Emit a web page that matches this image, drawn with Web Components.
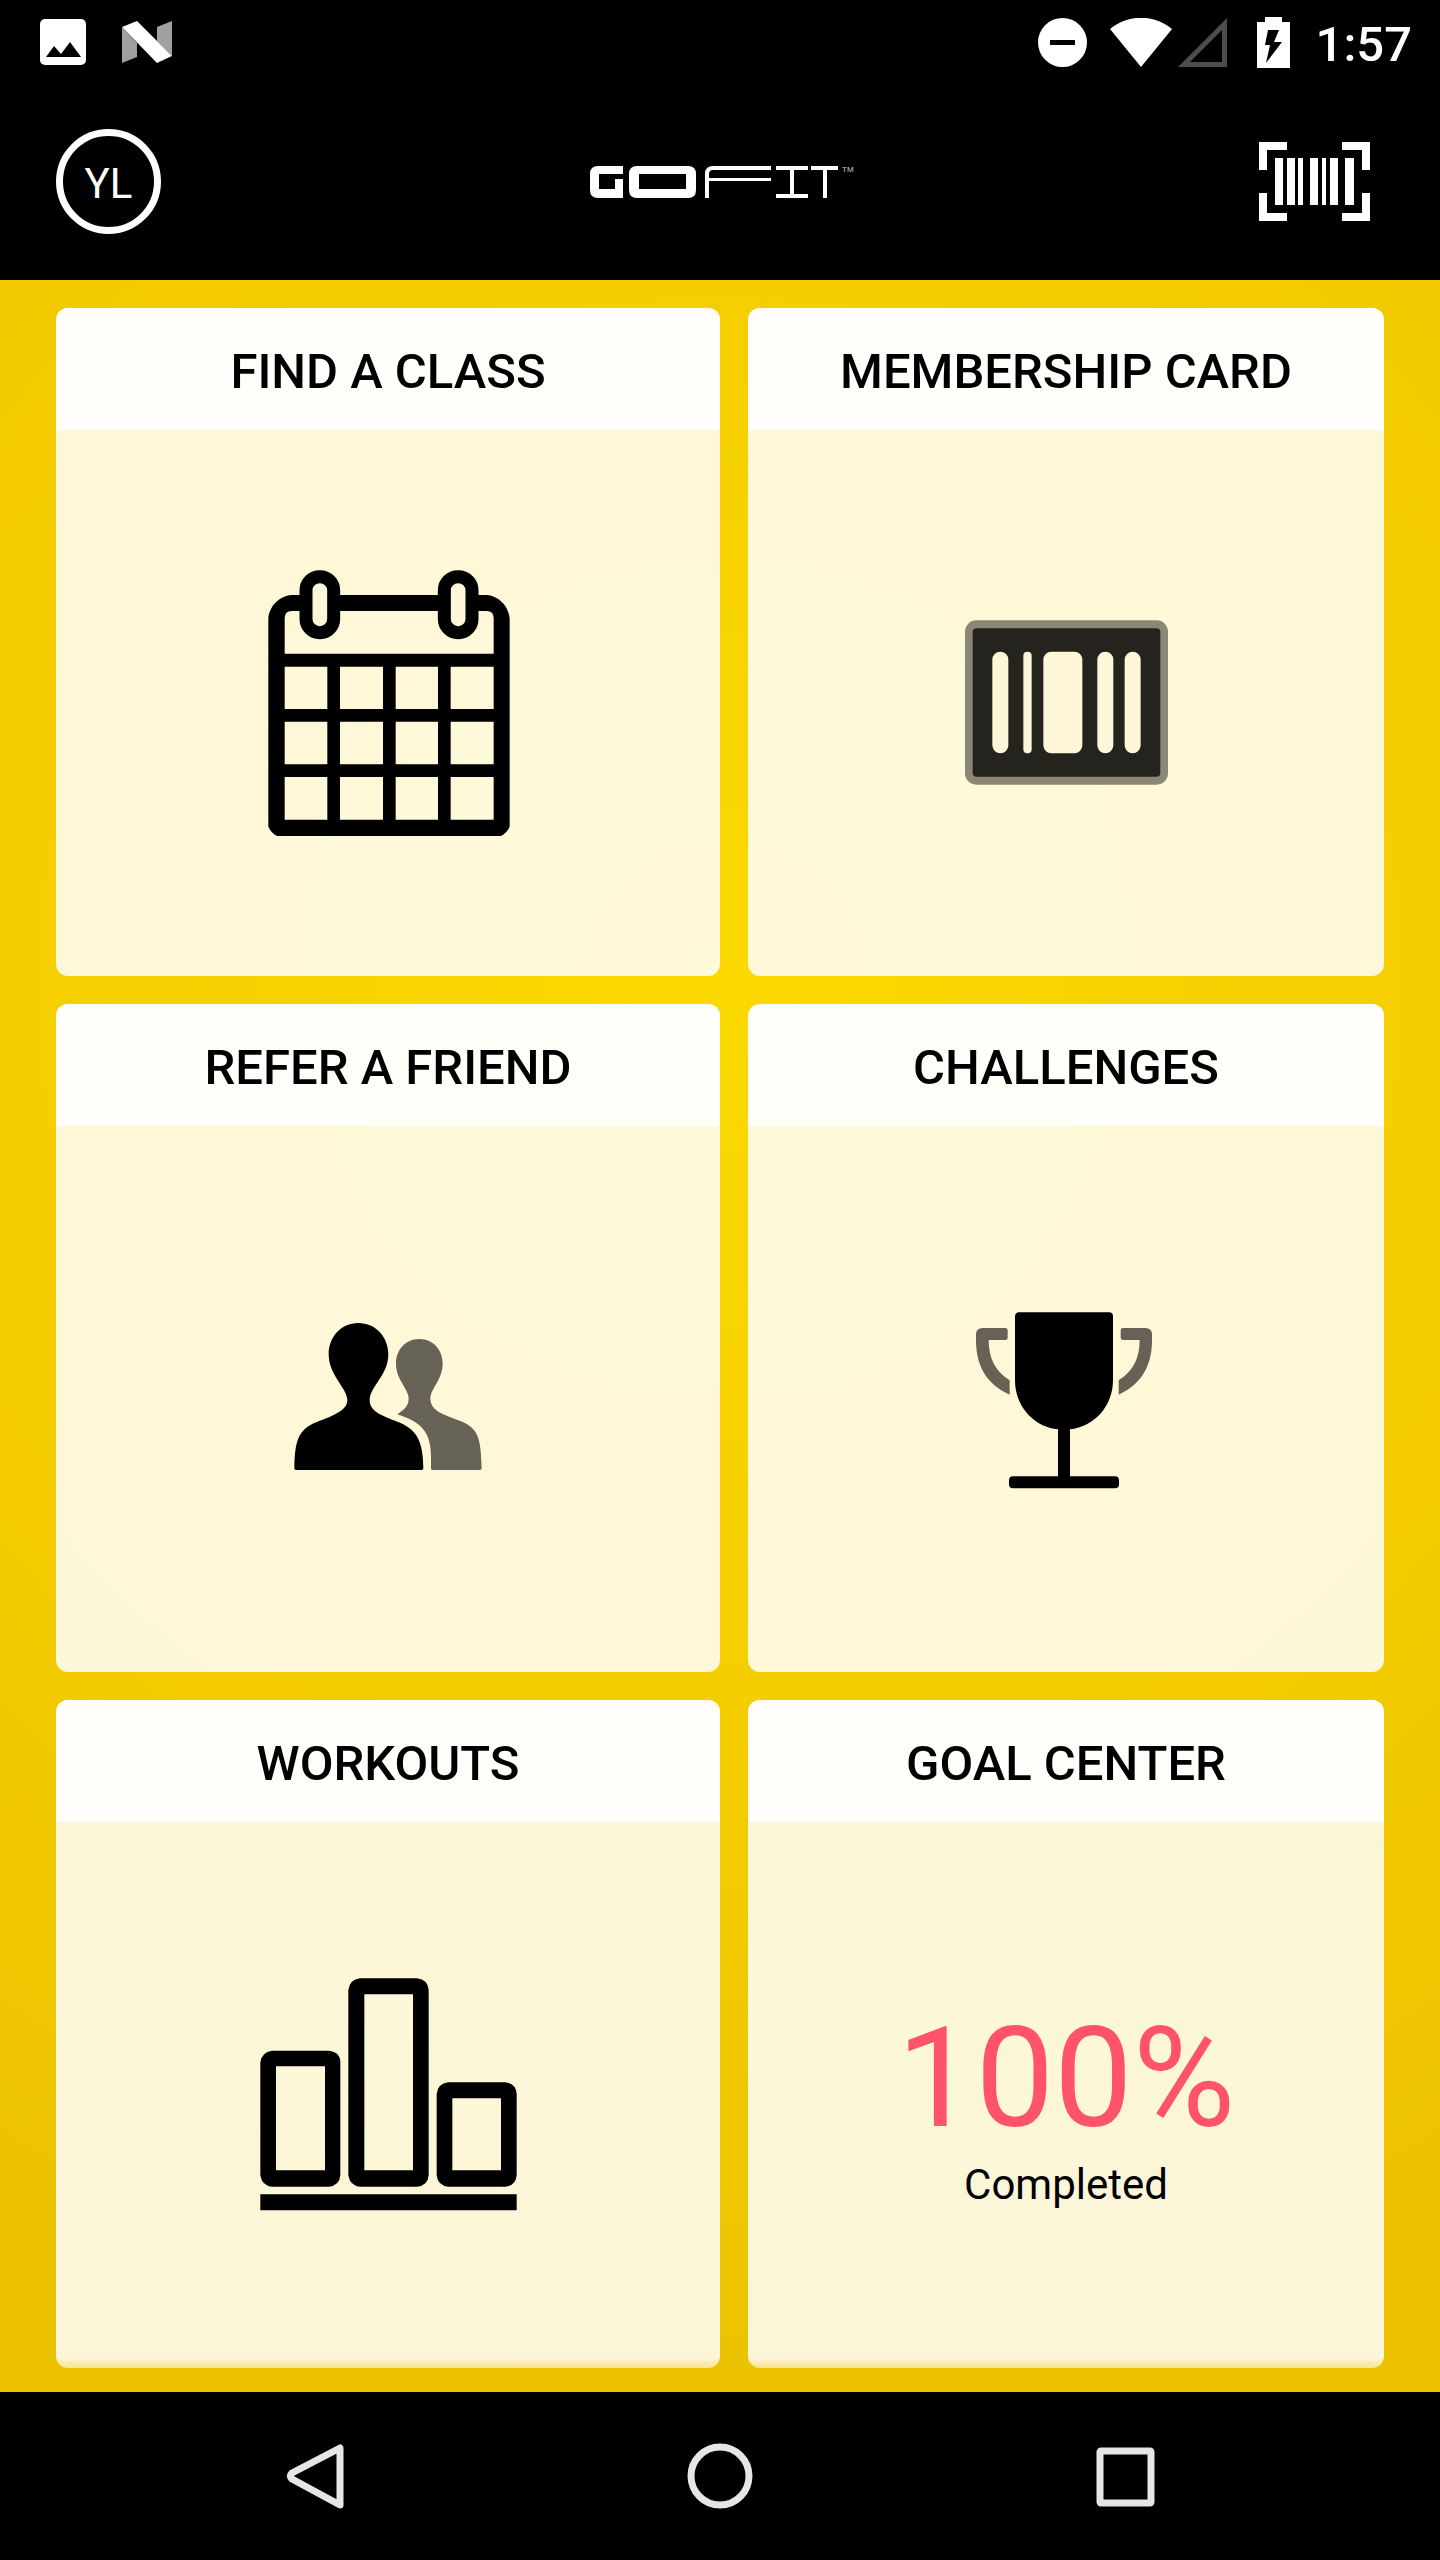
<!DOCTYPE html>
<html lang="en">
<head>
<meta charset="utf-8">
<meta name="viewport" content="width=device-width, initial-scale=1">
<title>GoFit</title>
<style>
    body {
        margin: 0;
        background: #000;
        font-family: Roboto, "Noto Sans", sans-serif;
    }
</style>
</head>
<body>
<gofit-app>
    <status-bar slot="status" time="1:57"></status-bar>
    <app-header slot="header" initials="YL"></app-header>

    <dashboard-tile href="#classes">
        <span slot="title">FIND A CLASS</span>
        <tile-icon name="calendar"></tile-icon>
    </dashboard-tile>
    <dashboard-tile href="#card">
        <span slot="title">MEMBERSHIP CARD</span>
        <tile-icon name="card"></tile-icon>
    </dashboard-tile>
    <dashboard-tile href="#refer">
        <span slot="title">REFER A FRIEND</span>
        <tile-icon name="friends"></tile-icon>
    </dashboard-tile>
    <dashboard-tile href="#challenges">
        <span slot="title">CHALLENGES</span>
        <tile-icon name="trophy"></tile-icon>
    </dashboard-tile>
    <dashboard-tile href="#workouts" faded>
        <span slot="title">WORKOUTS</span>
        <tile-icon name="chart"></tile-icon>
    </dashboard-tile>
    <dashboard-tile href="#goals" faded>
        <span slot="title">GOAL CENTER</span>
        <goal-progress>
            <span slot="value">100%</span>
            <span slot="label">Completed</span>
        </goal-progress>
    </dashboard-tile>

    <system-nav slot="nav"></system-nav>
</gofit-app>

<script>
/** App shell */
const appTemplate = document.createElement("template");
appTemplate.innerHTML = `
    <style>
        :host {
            display: flex;
            flex-direction: column;
            min-height: 100vh;
        }
        main {
            flex: 1;
            display: grid;
            grid-template-columns: 1fr 1fr;
            grid-auto-rows: 1fr;
            row-gap: 28px;
            padding: 28px 56px 24px;
            background: radial-gradient(circle 1500px at 50% 700px, #fbd900, #f4cd00 50%, #ebc100);
        }
        ::slotted(dashboard-tile:nth-of-type(even)) {
            margin-left: 28px;
        }
    </style>
    <slot name="status"></slot>
    <slot name="header"></slot>
    <main><slot></slot></main>
    <slot name="nav"></slot>
`;

class GofitApp extends HTMLElement {
    constructor() {
        super();
        this.attachShadow({ mode: "open" });
        this.shadowRoot.append(appTemplate.content.cloneNode(true));
    }
}

/** Status Bar */
const statusTemplate = document.createElement("template");
statusTemplate.innerHTML = `
    <style>
        :host {
            display: flex;
            align-items: center;
            justify-content: space-between;
            height: 84px;
            padding: 0 28px 0 40px;
            background: #000;
            color: #fff;
        }
        .group {
            display: flex;
            align-items: center;
        }
        .left { gap: 36px; }
        svg { display: block; }
        .wifi { margin-left: 23px; }
        .signal { margin-left: 6px; }
        .battery { margin-left: 30px; }
        time {
            margin-left: 26px;
            padding-top: 5px;
            font-size: 49px;
            font-weight: 500;
            line-height: 58px;
        }
    </style>
    <div class="group left">
        <svg width="46" height="46" viewBox="0 0 46 46" aria-hidden="true">
            <rect width="46" height="46" rx="5" fill="#fff"/>
            <path d="M6 38 14 27l7 8 9-12 11 15z" fill="#000"/>
        </svg>
        <svg width="50" height="42" viewBox="0 0 50 42" aria-hidden="true">
            <path d="M0 6 15 22v14L0 42zM35 6l15-6v35L35 20z" fill="#a0a0a0"/>
            <path d="M0 6 15 0l35 35-15 7z" fill="#fff"/>
        </svg>
    </div>
    <div class="group">
        <svg width="49" height="49" viewBox="0 0 98 98" aria-hidden="true">
            <circle cx="49" cy="49" r="49" fill="#fff"/>
            <path d="M24 44h50v10H24z" fill="#000"/>
        </svg>
        <svg class="wifi" width="62" height="49" viewBox="0 0 62 49" aria-hidden="true">
            <path d="M0 11C18-4 44-4 62 11L31 49z" fill="#fff"/>
        </svg>
        <svg class="signal" width="49" height="49" viewBox="0 0 49 49" aria-hidden="true">
            <path d="M49 0v49H0zM44 12 12 44h32z" fill="#4d4d4d" fill-rule="evenodd"/>
        </svg>
        <svg class="battery" width="33" height="51" viewBox="0 0 33 51" aria-hidden="true">
            <path d="M8 0h17v5h8v46H0V5h8z" fill="#fff"/>
            <path d="M11 13h11l-5 12h8L9 46l4-18H8z" fill="#000"/>
        </svg>
        <time></time>
    </div>
`;

class StatusBar extends HTMLElement {
    constructor() {
        super();
        this.attachShadow({ mode: "open" });
        this.shadowRoot.append(statusTemplate.content.cloneNode(true));
    }

    connectedCallback() {
        this.shadowRoot.querySelector("time").textContent = this.getAttribute("time");
    }
}

/** App Header */
const headerTemplate = document.createElement("template");
headerTemplate.innerHTML = `
    <style>
        :host {
            box-sizing: border-box;
            display: grid;
            grid-template-columns: 1fr auto 1fr;
            align-items: center;
            height: 196px;
            padding: 0 56px 1px;
            background: #000;
            color: #fff;
        }
        button {
            margin: 0;
            padding: 0;
            border: 0;
            background: none;
            color: inherit;
            font: inherit;
            cursor: pointer;
        }
        .avatar {
            box-sizing: border-box;
            width: 105px;
            height: 105px;
            padding-top: 3px;
            border: 7px solid #fff;
            border-radius: 50%;
            font-size: 42px;
        }
        .logo { padding-left: 4px; }
        .scan {
            justify-self: end;
            padding-right: 14px;
        }
        svg { display: block; }
    </style>
    <button class="avatar" type="button"></button>
    <svg class="logo" width="264" height="32" viewBox="0 0 264 32" role="img" aria-label="GoFit">
        <g fill="#fff">
            <path d="M33 0v8H9v15h16V13h8v19H8q-8 0-8-8V8q0-8 8-8z"/>
            <path d="M47 0h51q8 0 8 8v16q0 8-8 8H47q-8 0-8-8V8q0-8 8-8zm2 8v15h47V8z" fill-rule="evenodd"/>
            <path d="M181 0v4h-58q-4 0-4 4v4h62v3h-62v17h-4V8q0-8 8-8z"/>
            <path d="M186 0h32v4h-14v24h14v4h-32v-4h14V4h-14zM221 0h27v4h-11v28h-4V4h-12z"/>
        </g>
        <text x="252" y="6" fill="#ccc" font-family="Liberation Sans, sans-serif" font-size="8">TM</text>
    </svg>
    <button class="scan" type="button" aria-label="Scan">
        <svg width="111" height="79" viewBox="0 0 111 79" aria-hidden="true">
            <path d="M0 28V0h28v8H8v20zM83 0h28v28h-8V8H83zM0 51v28h28v-8H8V51zM111 51v28H83v-8h20V51z" fill="#fff"/>
            <path d="M16 16h8v47h-8zM28 16h8v47h-8zM39 16h5v47h-5zM51 16h8v47h-8zM63 16h4v47h-4zM71 16h8v47h-8zM86 16h9v47h-9z" fill="#fff"/>
        </svg>
    </button>
`;

class AppHeader extends HTMLElement {
    constructor() {
        super();
        this.attachShadow({ mode: "open" });
        this.shadowRoot.append(headerTemplate.content.cloneNode(true));
    }

    connectedCallback() {
        this.shadowRoot.querySelector(".avatar").textContent = this.getAttribute("initials");
    }
}

/** Dashboard Tile */
const tileTemplate = document.createElement("template");
tileTemplate.innerHTML = `
    <style>
        :host {
            display: block;
            min-width: 0;
        }
        a {
            display: flex;
            flex-direction: column;
            height: 100%;
            overflow: hidden;
            border-radius: 12px;
            background: rgba(255, 255, 255, 0.85);
            color: #000;
            text-align: center;
            text-decoration: none;
        }
        /* the last row fades out along its bottom edge */
        :host([faded]) a {
            background: linear-gradient(to top, rgba(255, 255, 255, 0.55), rgba(255, 255, 255, 0.85) 10px);
        }
        h2 {
            margin: 0;
            padding: 35px 0 29px;
            background: rgba(255, 255, 255, 0.87);
            font-size: 49px;
            font-weight: 500;
            line-height: 58px;
        }
        .content {
            flex: 1;
            display: flex;
            align-items: center;
            justify-content: center;
        }
    </style>
    <a>
        <h2><slot name="title"></slot></h2>
        <div class="content"><slot></slot></div>
    </a>
`;

class DashboardTile extends HTMLElement {
    constructor() {
        super();
        this.attachShadow({ mode: "open" });
        this.shadowRoot.append(tileTemplate.content.cloneNode(true));
    }

    connectedCallback() {
        this.shadowRoot.querySelector("a").href = this.getAttribute("href");
    }
}

/** Tile Icon */
const tileIcons = {
    calendar: `
        <svg width="270" height="270" viewBox="39 84 810 810">
            <path fill-rule="evenodd" d="M155 165H740C778 168 806 200 809 235V860Q800 880 782 888H112Q94 880 85 860V235C88 200 116 168 155 165Z
                M155 213Q134 213 134 235V341H761V235Q761 213 740 213Z
                M134 380V507H262V380ZM300 380V507H429V380ZM467 380V507H594V380ZM632 380V507H761V380Z
                M134 545V673H262V545ZM300 545V673H429V545ZM467 545V673H594V545ZM632 545V673H761V545Z
                M134 711V839H262V711ZM300 711V839H429V711ZM467 711V839H594V711ZM632 711V839H761V711Z"/>
            <g fill="#fef6d8" stroke="#000" stroke-width="39">
                <rect x="198" y="110" width="83" height="168" rx="41"/>
                <rect x="613" y="110" width="83" height="168" rx="41"/>
            </g>
        </svg>`,
    card: `
        <svg width="210" height="210" viewBox="93 24 630 630">
            <rect x="105" y="91" width="609" height="493" rx="34" fill="#8c8775"/>
            <rect x="128" y="115" width="563" height="445" rx="12" fill="#25231e"/>
            <g fill="#fef6d8">
                <rect x="187" y="185" width="48" height="305" rx="24"/>
                <rect x="280" y="185" width="25" height="305" rx="12"/>
                <rect x="340" y="185" width="117" height="305" rx="24"/>
                <rect x="502" y="185" width="48" height="305" rx="24"/>
                <rect x="584" y="185" width="48" height="305" rx="24"/>
            </g>
        </svg>`,
    friends: `
        <svg width="210" height="210" viewBox="39 12 630 630">
            <path d="M265 99C318 99 355 142 355 193C355 256 299 291 299 330C299 364 334 376 382 395C437 416 460 448 460 535Q460 540 455 540H78Q73 540 73 535C75 460 80 420 140 396C190 377 232 362 232 330C232 295 176 256 176 193C176 142 212 99 265 99Z"/>
            <path fill="#666255" d="M448 147C490 147 518 180 518 221C518 269 481 297 481 325C481 363 518 373 573 394C628 416 632 450 635 535Q635 540 630 540H487Q483 540 483 535V500C483 424 451 395 382 373C401 360 416 350 416 325C416 297 378 269 378 221C378 180 406 147 448 147Z"/>
        </svg>`,
    trophy: `
        <svg width="210" height="210" viewBox="33 12 630 630">
            <path d="M207 67H477Q489 67 489 79V270C489 350 432 410 360 418V559H495Q507 559 507 571V583Q507 595 495 595H189Q177 595 177 583V571Q177 559 189 559H324V418C252 410 195 350 195 270V79Q195 67 207 67Z"/>
            <g fill="#666255">
                <path d="M98 114H166Q173 114 173 121V143Q173 150 166 150H116C116 206 136 243 179 271V314C108 282 78 226 78 150V134Q78 114 98 114Z"/>
                <path d="M586 114H519Q512 114 512 121V143Q512 150 519 150H569C569 206 549 243 506 271V314C576 282 606 226 606 150V134Q606 114 586 114Z"/>
            </g>
        </svg>`,
    chart: `
        <svg width="270" height="270" viewBox="39 30 810 810">
            <path fill-rule="evenodd" d="M96 302H266Q301 306 301 337V675Q299 707 266 710H96Q65 707 61 675V337Q65 306 96 302ZM108 349V661H255V349Z
                M360 85H531Q564 89 566 120V675Q564 707 531 710H360Q329 707 325 675V120Q329 89 360 85ZM373 133V661H519V133Z
                M625 397H796Q828 401 830 432V675Q828 707 796 710H625Q593 707 590 675V432Q593 401 625 397ZM637 445V661H783V445Z
                M61 733H830V781H61Z"/>
        </svg>`
};

class TileIcon extends HTMLElement {
    constructor() {
        super();
        this.attachShadow({ mode: "open" });
    }

    connectedCallback() {
        this.setAttribute("aria-hidden", "true");
        this.shadowRoot.innerHTML = `
            <style>
                :host { display: block; }
                svg { display: block; }
            </style>
            ${tileIcons[this.getAttribute("name")]}
        `;
    }
}

/** Goal Progress */
const goalTemplate = document.createElement("template");
goalTemplate.innerHTML = `
    <style>
        :host {
            display: block;
            padding-top: 16px;
        }
        .value {
            color: #ff536c;
            font-size: 140px;
            line-height: 164px;
        }
        .label {
            font-size: 42px;
            line-height: 50px;
        }
    </style>
    <div class="value"><slot name="value"></slot></div>
    <div class="label"><slot name="label"></slot></div>
`;

class GoalProgress extends HTMLElement {
    constructor() {
        super();
        this.attachShadow({ mode: "open" });
        this.shadowRoot.append(goalTemplate.content.cloneNode(true));
    }
}

/** System Navigation */
const navTemplate = document.createElement("template");
navTemplate.innerHTML = `
    <style>
        :host {
            display: block;
            background: #000;
        }
        nav {
            display: grid;
            grid-template-columns: repeat(3, 1fr);
            height: 168px;
            padding: 0 112px;
        }
        button {
            display: flex;
            align-items: center;
            justify-content: center;
            padding: 0;
            border: 0;
            background: none;
            cursor: pointer;
        }
        svg {
            fill: none;
            stroke: #e6e6e6;
            stroke-width: 7;
            stroke-linejoin: round;
        }
    </style>
    <nav>
        <button type="button" aria-label="Back">
            <svg width="66" height="66" viewBox="0 0 66 66"><path d="M58 5v57L10 36q-3-3 0-6z"/></svg>
        </button>
        <button type="button" aria-label="Home">
            <svg width="66" height="66" viewBox="0 0 66 66"><circle cx="33" cy="33" r="29"/></svg>
        </button>
        <button type="button" aria-label="Recent apps">
            <svg width="66" height="66" viewBox="0 0 66 66"><rect x="8" y="8" width="51" height="52" rx="1"/></svg>
        </button>
    </nav>
`;

class SystemNav extends HTMLElement {
    constructor() {
        super();
        this.attachShadow({ mode: "open" });
        this.shadowRoot.append(navTemplate.content.cloneNode(true));
    }
}

customElements.define("gofit-app", GofitApp);
customElements.define("status-bar", StatusBar);
customElements.define("app-header", AppHeader);
customElements.define("dashboard-tile", DashboardTile);
customElements.define("tile-icon", TileIcon);
customElements.define("goal-progress", GoalProgress);
customElements.define("system-nav", SystemNav);
</script>
</body>
</html>
